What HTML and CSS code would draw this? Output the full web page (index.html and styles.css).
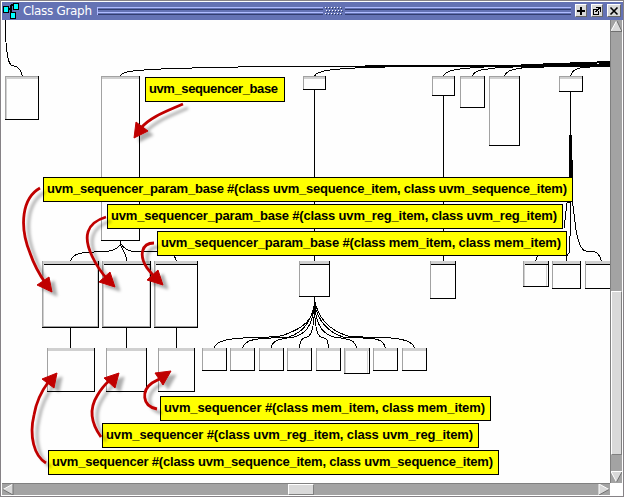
FILE: index.html
```
<!DOCTYPE html>
<html lang="en">
<head>
<meta charset="utf-8">
<title>Class Graph</title>
<link rel="stylesheet" href="styles.css">
</head>
<body>
<div class="window">
  <header class="titlebar">
    <svg class="app-icon" width="20" height="18" viewBox="2 2 20 18" shape-rendering="crispEdges">
      <path d="M8 9h4M11 5v8M11 5h3M11 13h2" stroke="#000" stroke-width="2" fill="none"/>
      <g fill="#0ff" stroke="#000"><rect x="3.500" y="6.500" width="5" height="6"/><rect x="13.500" y="3.500" width="5" height="6"/><rect x="10.500" y="12.500" width="5" height="6"/></g>
    </svg>
    <svg class="title" width="70" height="18" viewBox="22 2 70 18"><text x="23" y="15" textLength="69">Class Graph</text></svg>
    <div class="grooves"></div>
    <svg class="grip" width="22" height="18" viewBox="323 2 22 18" shape-rendering="crispEdges">
      <g fill="none" stroke="#fff" stroke-dasharray="1 2"><path d="M325 7.500h18M326 10.500h17M325 13.500h18"/></g>
      <g fill="none" stroke="#303c60" stroke-dasharray="1 2"><path d="M326 8.500h17M327 11.500h16M326 14.500h17"/></g>
    </svg>
    <div class="grooves right"></div>
    <div class="buttons">
      <button class="tool" aria-label="Add"><svg width="10" height="10" viewBox="0 0 10 10" shape-rendering="crispEdges"><path d="M5 1v8M1 5h8" stroke="#000" stroke-width="2"/></svg></button>
      <button class="tool" aria-label="Undock"><svg width="10" height="10" viewBox="0 0 10 10" shape-rendering="crispEdges"><path d="M5 3.500H1.500v5h5V5M4 1.500h4.500V6" fill="none" stroke="#000"/><path d="M3 6h2V5h1V4h1V3h1V2H6v1H5v1H4v1H3z"/></svg></button>
      <button class="tool close" aria-label="Close"><svg width="10" height="10" viewBox="0 0 10 10"><path d="M1.500 1.500l7 7M8.500 1.500l-7 7" stroke="#000" stroke-width="1.600"/></svg></button>
    </div>
  </header>
  <div class="body">
    <svg class="graph" width="608" height="463" viewBox="2 20 608 463">
      <defs>
        <filter id="shadow" x="-40%" y="-40%" width="200%" height="200%"><feDropShadow dx="5" dy="4" stdDeviation="1.500" flood-color="#000" flood-opacity=".32"/></filter>
      </defs>
      <!-- edges -->
      <path class="edge trunk" d="M365 66H406M406 66H610M530 65L610 62"/>
      <g class="edge">
        <path d="M5.500 20V32Q6 51 8.500 60Q10 66 14 66C19 67 21 70 22.500 76"/>
        <path d="M120.500 76C123 71 132 71 150 69.500C180 68 205 67.500 268 66.500H406L610 64.500"/>
        <path d="M314.500 76C317 70 335 69 365 67.500L406 66.500M545 66.500L610 63.500"/>
        <path d="M443.500 76C446 69 462 69 475 67.500L530 64.500"/>
        <path d="M472.500 76C475 69 484 70 495 68L540 65.500"/>
        <path d="M504.500 76C507 69 518 69 524 67.500L545 67"/>
        <path d="M570.500 76C573 69 578 68 584 67.500L610 65.500"/>
        <path d="M314.500 89V261M443.500 95V261M570.500 91V180"/>
        <path d="M569.500 135V202L567 203L564 228M571.500 135V202M572.500 160V202L576 230Q580 251 586 251C595 251 599 252 601.500 261M570.500 201V228L569 253L566.500 256V261M537.500 256L535.500 261"/>
        <path d="M120.500 240V244C115 254 100 251 85 252.500C75 254 72 256 70.500 261M120.500 243C121 252 126 249 126.500 261M120.500 243C127 255 140 251 160 252C171 252 175 255 176.500 261"/>
        <path d="M70.500 327V348M126.500 327V348M176.500 327V348"/>
        <path d="M314.500 296V308C310 326 294 331 284 335C276 340 216 333 214.500 348"/>
        <path d="M314.500 304C310 326 300 333 289 337C270 339 245 336 242.500 348"/>
        <path d="M314.500 306C312 327 305 334 294 337C279 339 272 340 271.500 348"/>
        <path d="M314.500 308C314 329 311 336 307 337C301 338 300 342 299.500 348"/>
        <path d="M314.500 308C315 329 318 336 321 337C328 338 328 342 328.500 348"/>
        <path d="M314.500 306C317 327 323 334 334 337C350 339 355 340 356.500 348"/>
        <path d="M314.500 304C319 325 331 333 343 337C370 339 383 336 385.500 348"/>
        <path d="M314.500 300C319 323 335 332 348 336C360 339 411 333 414.500 348"/>
      </g>
      <!-- class boxes: header strip, left edge, then dark right and bottom edges -->
      <path class="strip" d="M5 76h33v3h-33zM101 76h38v3h-38zM303 76h22v3h-22zM432 76h22v3h-22zM460 76h24v3h-24zM489 76h30v3h-30zM559 76h23v3h-23z"/>
      <path class="strip" d="M42 261h56v3h-56zM102 261h48v3h-48zM154 261h43v3h-43zM299 261h30v3h-30zM430 261h25v3h-25zM523 261h25v3h-25zM552 261h28v3h-28zM585 261h25v3h-25z"/>
      <path class="strip" d="M47 348h47v3h-47zM106 348h40v3h-40zM158 348h36v3h-36zM202 348h24v3h-24zM230 348h24v3h-24zM259 348h24v3h-24zM287 348h24v3h-24zM316 348h24v3h-24zM344 348h25v3h-25zM373 348h24v3h-24zM402 348h24v3h-24z"/>
      <path class="lightline" d="M6.500 77V119M43.500 262V327M103.500 262V327M155.500 262V327M524.500 262V286M97.500 264V326M149.500 264V326M546.500 264V286M345.500 350V373M367.500 350V373"/>
      <path class="left" d="M5.500 119V76.500H38M101.500 240V76.500H139M303.500 89V76.500H325M432.500 95V76.500H454M460.500 107V76.500H484M489.500 145V76.500H519M559.500 91V76.500H582"/>
      <path class="left" d="M42.500 261V327M102.500 261V327M154.500 261V327M299.500 261V296M430.500 261V298M523.500 261V286M552.500 261V288M585.500 261V288M47.500 348V391M106.500 348V391M158.500 348V391M202.500 348V370M230.500 348V370M259.500 348V370M287.500 348V370M316.500 348V370M344.500 348V373M373.500 348V370M402.500 348V370M43 326.500H98M103 326.500H150M155 326.500H197"/>
      <path class="dark" d="M38.500 76V119.500H5M139.500 76V240.500H101M325.500 76V89.500H303M454.500 76V95.500H432M484.500 76V107.500H460M519.500 76V145.500H489M582.500 76V91.500H559"/>
      <path class="dark" d="M98.500 261V327.500H42M150.500 261V327.500H102M197.500 261V327.500H154M329.500 261V296.500H299M455.500 261V298.500H430M548.500 261V286.500H523M580.500 261V288.500H552M610 288.500H585"/>
      <path class="dark" d="M44 264.500H98M104 264.500H150M156 264.500H197M300 264.500H329M431 264.500H455M525 264.500H548M553 264.500H580M586 264.500H610"/>
      <path class="dark" d="M94.500 348V391.500H47M146.500 348V391.500H106M194.500 348V391.500H158M226.500 348V370.500H202M254.500 348V370.500H230M283.500 348V370.500H259M311.500 348V370.500H287M340.500 348V370.500H316M369.500 348V373.500H344M397.500 348V370.500H373M426.500 348V370.500H402"/>
      <!-- callouts -->
      <g class="callout">
        <rect x="145.500" y="77.500" width="139" height="24"/><text x="149" y="93" textLength="129">uvm_sequencer_base</text>
        <rect x="43.500" y="177.500" width="529" height="24"/><text x="47" y="193" textLength="520">uvm_sequencer_param_base #(class uvm_sequence_item, class uvm_sequence_item)</text>
        <rect x="107.500" y="204.500" width="455" height="24"/><text x="111" y="220" textLength="446">uvm_sequencer_param_base #(class uvm_reg_item, class uvm_reg_item)</text>
        <rect x="157.500" y="231.500" width="409" height="24"/><text x="161" y="247" textLength="400">uvm_sequencer_param_base #(class mem_item, class mem_item)</text>
        <rect x="160.500" y="396.500" width="330" height="24"/><text x="164" y="412" textLength="321">uvm_sequencer #(class mem_item, class mem_item)</text>
        <rect x="102.500" y="423.500" width="376" height="24"/><text x="106" y="439" textLength="367">uvm_sequencer #(class uvm_reg_item, class uvm_reg_item)</text>
        <rect x="48.500" y="450.500" width="450" height="24"/><text x="52" y="466" textLength="441">uvm_sequencer #(class uvm_sequence_item, class uvm_sequence_item)</text>
      </g>
      <!-- pointers -->
      <g class="pointer" filter="url(#shadow)">
        <path d="M183 104C167 111 150 117 141 128"/><path class="head" d="M134 138L136 122L148 131z"/>
        <path d="M40 188C22 198 19 226 30 253Q35 268 46 284"/><path class="head" d="M52 292L37 285L49 277z"/>
        <path d="M106 217C86 223 83 237 92 256Q98 269 108 280"/><path class="head" d="M115 287L99 282L110 272z"/>
        <path d="M154 243C141 243 139 256 147 268L156 279"/><path class="head" d="M163 285L147 280L158 270z"/>
        <path d="M46 463C34 456 29 436 34 415Q37 397 49 381"/><path class="head" d="M57 373L54 388L42 379z"/>
        <path d="M101 437C91 423 89 409 97 396Q102 387 110 380"/><path class="head" d="M119 373L115 388L104 378z"/>
        <path d="M157 409C141 406 142 390 152 383L163 377"/><path class="head" d="M171 371L163 385L155 373z"/>
      </g>
    </svg>
    <div class="vbar">
      <svg width="11" height="12" viewBox="0 0 11 12"><path d="M5.500 1L11 11H0z" fill="#d9d9d9"/><path d="M0 11L5.500 1" stroke="#fff"/><path d="M0 11.500h11L6 1" stroke="#707070" fill="none"/></svg>
      <div class="thumb"></div>
      <svg width="11" height="12" viewBox="0 0 11 12"><path d="M0 1h11L5.500 11z" fill="#d9d9d9"/><path d="M5.500 11L0 .5h11" stroke="#fff" fill="none"/><path d="M11 1L5.500 11" stroke="#707070"/></svg>
    </div>
  </div>
  <div class="hbar">
    <svg width="12" height="11" viewBox="0 0 12 11"><path d="M1 5.500L11 0v11z" fill="#d9d9d9"/><path d="M1 5.500L11 0" stroke="#fff"/><path d="M1 5.500l10 5.500V0" stroke="#707070" fill="none"/></svg>
    <div class="thumb"></div>
    <svg width="12" height="11" viewBox="0 0 12 11"><path d="M1 0l10 5.500L1 11z" fill="#d9d9d9"/><path d="M1 11V0l10 5.500" stroke="#fff" fill="none"/><path d="M1 11l10-5.500" stroke="#707070"/></svg>
  </div>
</div>
</body>
</html>
```
FILE: styles.css
```
* { box-sizing: border-box; }
body { margin: 0; background: #fff; }
svg { display: block; }
.window {
  width: 624px;
  height: 497px;
  padding: 1px 0 0 1px;
  border: 1px solid #868286;
  display: flex;
  flex-direction: column;
  background: #fff;
  overflow: hidden;
}
.titlebar {
  height: 18px;
  flex: none;
  display: flex;
  background: #6472b4;
}
.titlebar svg { flex: none; }
.title text {
  font: 12px "DejaVu Sans", sans-serif;
  fill: #fff;
}
.grooves {
  width: 226px;
  height: 8px;
  margin: 5px 0 0 5px;
  border-left: 1px solid #b0bcff;
  background: linear-gradient(#b0bcff 0 1px, #6472b4 1px 2px, #343e70 2px 3px, #6472b4 3px 5px, #b0bcff 5px 6px, #6472b4 6px 7px, #343e70 7px 8px);
}
.grooves.right { width: 226px; margin-left: 0; border-left: 0; }
.buttons { display: flex; padding: 2px 0 0 4px; gap: 4px; }
.tool {
  width: 12px;
  height: 13px;
  padding: 0;
  border: 1px solid;
  border-color: #fff #686868 #686868 #fff;
  background: #d9d9d9;
  display: flex;
  align-items: center;
  justify-content: center;
}
.tool.close { width: 14px; }
.body { display: flex; height: 463px; flex: none; }
.graph { flex: none; background: #fefefe; }
.edge, .dark, .left, .lightline { fill: none; shape-rendering: crispEdges; }
.edge, .dark { stroke: #000; }
.trunk { stroke-width: 2; }
.left { stroke: #a2a2a2; }
.lightline { stroke: #d0d0d0; }
.strip { fill: #d0d0d0; shape-rendering: crispEdges; }
.callout rect { fill: #ff0; stroke: #000; shape-rendering: crispEdges; }
.callout text { font: bold 13px "Liberation Sans", sans-serif; fill: #000; }
.pointer { fill: none; stroke: #c00000; stroke-width: 2.8; stroke-linecap: butt; }
.pointer .head { fill: #c00000; stroke-width: 1; }
.vbar {
  width: 12px;
  flex: none;
  display: flex;
  flex-direction: column;
  background: #a3a3a3;
  border-left: 1px solid #808080;
}
.vbar .thumb {
  height: 164px;
  margin: 259px 0 16px;
  background: #d9d9d9;
  border: 1px solid;
  border-color: #fff #808080 #808080 #fff;
}
.hbar {
  width: 608px;
  height: 12px;
  flex: none;
  display: flex;
  background: #a3a3a3;
  border-top: 1px solid #808080;
}
.hbar .thumb {
  width: 26px;
  height: 11px;
  margin: 0 auto 0 274px;
  background: #d9d9d9;
  border: 1px solid;
  border-color: #fff #808080 #808080 #fff;
}
```
